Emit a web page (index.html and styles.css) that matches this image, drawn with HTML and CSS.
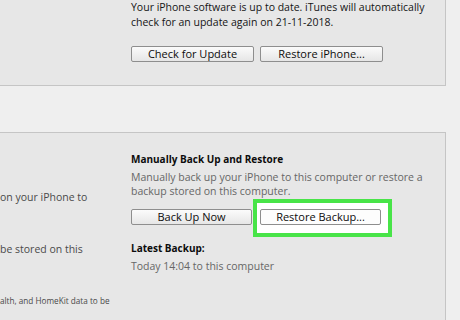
FILE: index.html
```html
<!DOCTYPE html>
<html lang="en">
<head>
    <meta charset="UTF-8">
    <title>iPhone Summary</title>
    <link rel="stylesheet" href="styles.css">
</head>
<body>
<div class="panel panel-software">
    <p class="info">Your iPhone software is up to date. iTunes will automatically<br>check for an update again on 21-11-2018.</p>
    <div class="buttons">
        <div class="btn">Check for Update</div>
        <div class="btn">Restore iPhone...</div>
    </div>
</div>
<div class="panel panel-backup">
    <div class="col-left">
        <p class="cut">on your iPhone to</p>
        <p class="cut cut-b">be stored on this</p>
        <p class="cut cut-small">alth, and HomeKit data to be</p>
    </div>
    <div class="col-right">
        <h3 class="title">Manually Back Up and Restore</h3>
        <p class="desc">Manually back up your iPhone to this computer or restore a<br>backup stored on this computer.</p>
        <div class="buttons buttons-backup">
            <div class="btn">Back Up Now</div>
            <div class="highlight">
                <div class="btn btn-light">Restore Backup...</div>
            </div>
        </div>
        <h3 class="title title-latest">Latest Backup:</h3>
        <p class="desc">Today 14:04 to this computer</p>
    </div>
</div>
</body>
</html>
```

FILE: styles.css
```css
body {
    margin: 0;
    background-color: #efefef;
    font-family: "Open Sans", "Liberation Sans", sans-serif;
    font-size: 10.5px;
    color: #151515;
    overflow: hidden;
    height: 320px;
}
p, h3 {
    margin: 0;
}
.panel {
    width: 446px;
    box-sizing: border-box;
    background-color: #e7e7e7;
    border-right: 1px solid #c5c5c5;
}
.panel-software {
    height: 86px;
    padding-left: 131px;
    border-bottom: 1px solid #c5c5c5;
}
.info {
    line-height: 15px;
}
.buttons {
    display: flex;
    gap: 6px;
    margin-top: 16px;
}
.btn {
    width: 123px;
    height: 16px;
    box-sizing: border-box;
    line-height: 14px;
    text-align: center;
    font-size: 11px;
    border: 1px solid #8e8e8e;
    border-radius: 2px;
    background: linear-gradient(#fbfbfb, #e6e6e6);
    color: #0c0c0c;
}
.panel-backup {
    margin-top: 46px;
    height: 200px;
    border-top: 1px solid #c5c5c5;
    display: grid;
    grid-template-columns: 131px 1fr;
}
.col-left {
    padding-top: 57px;
    color: #4a4a4a;
}
.cut {
    line-height: 15px;
    white-space: nowrap;
}
.cut-b {
    margin-top: 37px;
}
.cut-small {
    margin-top: 38px;
    font-size: 8.2px;
    line-height: 12px;
}
.col-right {
    padding-top: 19px;
}
.title {
    font-size: 10px;
    font-weight: bold;
    line-height: 15px;
    color: #0c0c0c;
}
.desc {
    margin-top: 3px;
    line-height: 14px;
    color: #666;
}
.buttons-backup {
    margin-top: 11px;
    gap: 8px;
}
.buttons-backup .btn {
    width: 121px;
}
.highlight {
    margin: -10px -11px -12px -7px;
    padding: 6px 7px 8px 3px;
    border: 4px solid #48e448;
    background-color: #fff;
}
.btn-light {
    background: #fdfdfd;
}
.title-latest {
    margin-top: 16px;
}
```
